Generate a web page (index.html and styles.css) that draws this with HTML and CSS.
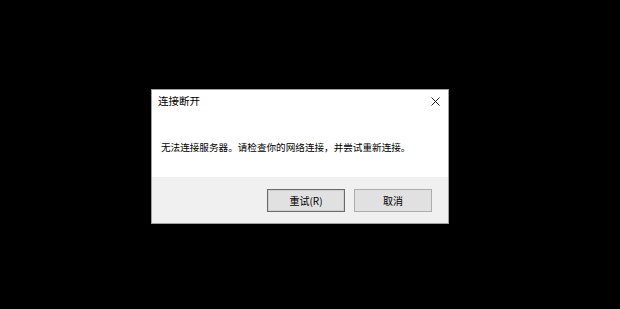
FILE: index.html
```html
<!DOCTYPE html>
<html lang="zh-CN">
<head>
<meta charset="utf-8">
<link rel="stylesheet" href="styles.css">
</head>
<body>
<div class="dialog">
  <div class="header">
    <span class="title">连接断开</span>
    <svg class="close" width="9" height="9" viewBox="0 0 9 9"><path d="M0.5 0.5 L8.5 8.5 M8.5 0.5 L0.5 8.5" stroke="#222" stroke-width="1" fill="none"/></svg>
  </div>
  <div class="content">
    <p class="message">无法连接服务器。请检查你的网络连接，并尝试重新连接。</p>
  </div>
  <div class="footer">
    <button class="btn btn-default">重试(R)</button>
    <button class="btn">取消</button>
  </div>
</div>
</body>
</html>
```
FILE: styles.css
```css
html, body {
  margin: 0;
  background: #000;
  height: 100%;
}
body {
  padding: 89px 0 0 151px;
  box-sizing: border-box;
  font-family: "Noto Sans CJK SC", "Noto Sans", sans-serif;
  color: #000;
}
.dialog {
  width: 298px;
  height: 135px;
  box-sizing: border-box;
  border: 1px solid #a0a0a0;
  background: #fff;
  display: flex;
  flex-direction: column;
}
.header {
  height: 22px;
  display: flex;
  align-items: center;
  justify-content: space-between;
  padding: 0 8px 0 6px;
}
.title {
  font-size: 10.5px;
  line-height: 1;
}
.close {
  display: block;
}
.content {
  flex: 1;
  display: flex;
  align-items: center;
  padding: 6px 0 0 9px;
}
.message {
  margin: 0;
  font-size: 9.6px;
  line-height: 1;
}
.footer {
  height: 46px;
  background: #f0f0f0;
  display: flex;
  align-items: center;
  justify-content: flex-end;
  gap: 9px;
  padding: 0 16px 0 0;
}
.btn {
  width: 78px;
  height: 23px;
  box-sizing: border-box;
  border: 1px solid #adadad;
  background: #e1e1e1;
  font-family: "Noto Sans CJK SC", "Noto Sans", sans-serif;
  font-size: 10px;
  color: #000;
  padding: 0;
}
.btn-default {
  border: 1px solid #6a6a6a;
  box-shadow: inset 0 0 0 1px #d0d0d0;
}
```
